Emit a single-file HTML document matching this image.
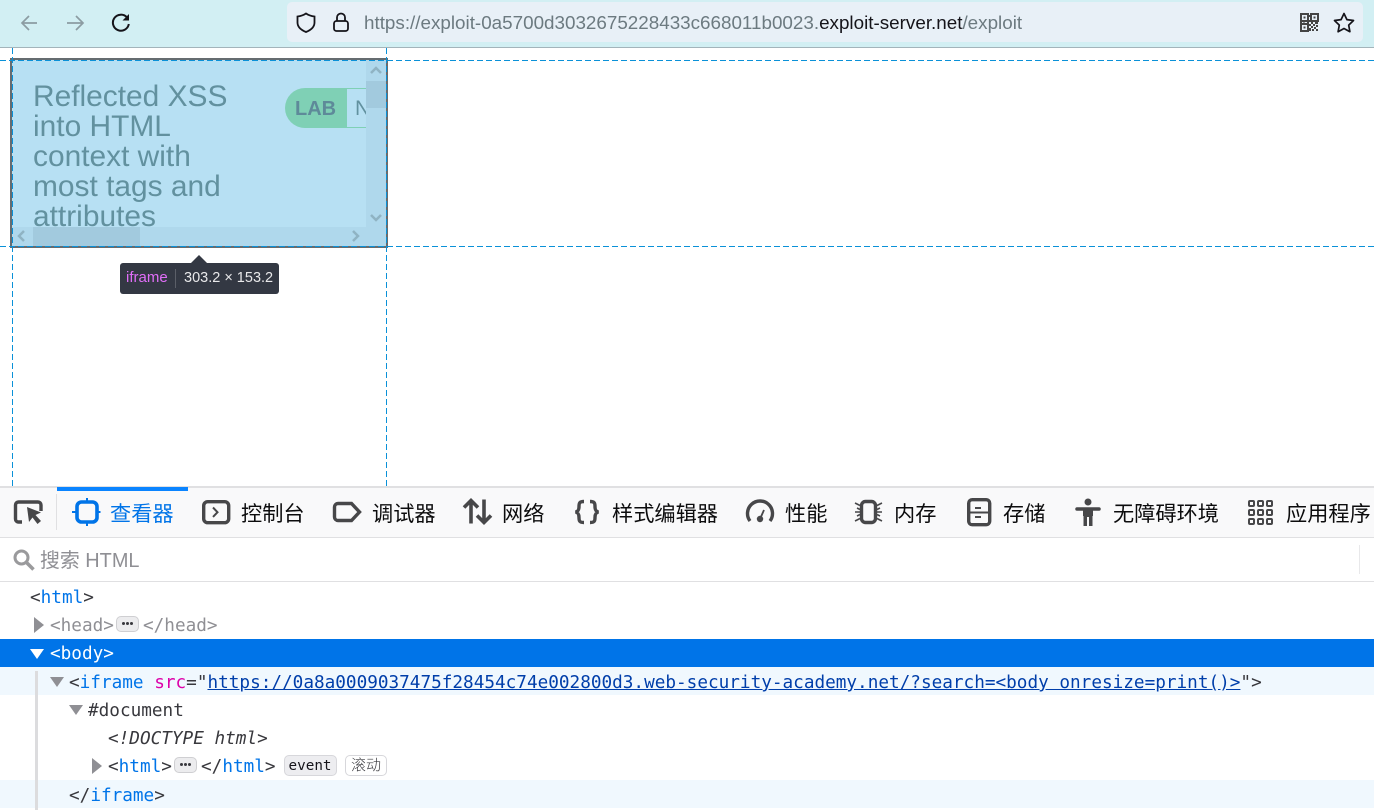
<!DOCTYPE html>
<html lang="zh"><head><meta charset="utf-8"><style>
html,body{margin:0;padding:0;width:1374px;height:810px;overflow:hidden;background:#fff}
body{position:relative;font-family:"Liberation Sans","Noto Sans CJK SC",sans-serif}
.a{position:absolute}
.t{position:absolute;white-space:nowrap}
.tab{position:absolute;top:498px;height:30px;line-height:30px;font-size:21.2px;color:#0c0c0d;white-space:nowrap;font-family:"Noto Sans CJK SC",sans-serif;font-weight:400}
svg{position:absolute;overflow:visible}
.row{position:absolute;left:0;width:1374px;height:28px}
.c{position:absolute;white-space:pre;font-family:"DejaVu Sans Mono",monospace;font-size:17.7px;line-height:28px;color:#38383d}
.b{color:#0074e8}.m{color:#dd00a9}.g{color:#8f8f94}
.more{position:absolute;width:23px;height:16px;background:#ececee;border:1px solid #cfcfd2;border-radius:5px;box-sizing:border-box}
.more:after{content:"";position:absolute;left:5px;top:5px;width:3px;height:3px;border-radius:50%;background:#38383d;box-shadow:4px 0 #38383d,8px 0 #38383d}
.tri{position:absolute;width:0;height:0}
.r{border-top:8px solid transparent;border-bottom:8px solid transparent;border-left:10px solid #8f8f94}
.d{border-left:7px solid transparent;border-right:7px solid transparent;border-top:10px solid #8f8f94}
</style></head><body>
<!-- browser toolbar -->
<div class="a" style="left:0;top:0;width:1374px;height:47px;background:#d2eff3"></div>
<div class="a" style="left:0;top:47px;width:1374px;height:1px;background:#a3b4ba"></div>
<div class="a" style="left:287px;top:2px;width:1076px;height:40px;background:#e8f0f7;border-radius:5px"></div>
<svg style="left:0;top:0" width="1374" height="47" fill="none">
<path d="M37 23H22M29 16l-7 7 7 7" stroke="#8c9ca2" stroke-width="1.7"/>
<path d="M67 23h15M76 16l7 7-7 7" stroke="#8c9ca2" stroke-width="1.7"/>
<path d="M127 17.5a8 8 0 1 0 1.8 6.5" stroke="#15141a" stroke-width="2"/><path d="M129 14v6.5h-6.5z" fill="#15141a"/>
<path d="M306 13.5c-3 2-6 2.7-8.500 3v6c0 4.500 3.500 7.500 8.500 9.500 5-2 8.500-5 8.500-9.500v-6c-2.500-.3-5.500-1-8.500-3z" stroke="#15141a" stroke-width="1.800"/>
<rect x="334" y="21" width="14" height="10" rx="2.500" stroke="#15141a" stroke-width="1.800"/><path d="M337 21v-3.500a4 4 0 0 1 8 0V21" stroke="#15141a" stroke-width="1.800"/>
<g fill="#444"><path d="M1301 14h7v7h-7zM1311 14h7v7h-7zM1301 24h7v7h-7z" fill="none" stroke="#444" stroke-width="2"/><rect x="1309" y="15" width="2" height="2"/><rect x="1303.500" y="16.500" width="2" height="2"/><rect x="1313.500" y="16.500" width="2" height="2"/><rect x="1303.500" y="26.500" width="2" height="2"/><rect x="1300" y="22" width="2" height="2"/><rect x="1303" y="22.500" width="2" height="1.500"/><rect x="1307" y="22" width="2" height="2"/><rect x="1309" y="20" width="2" height="2"/><rect x="1311" y="22" width="2" height="2"/><rect x="1315" y="22" width="3" height="2"/><rect x="1309" y="24" width="2" height="2"/><rect x="1313" y="24" width="2" height="2"/><rect x="1316" y="25" width="2" height="2"/><rect x="1311" y="26" width="2" height="2"/><rect x="1314" y="27" width="2" height="2"/><rect x="1309" y="28" width="2" height="3"/><rect x="1312" y="29" width="2" height="2"/><rect x="1316" y="29" width="2" height="2"/></g>
<path d="M1344 13.500l2.900 6.100 6.600.9-4.800 4.600 1.200 6.600-5.900-3.200-5.900 3.200 1.200-6.600-4.800-4.600 6.600-.9z" stroke="#15141a" stroke-width="1.700" stroke-linejoin="round"/>
</svg>
<div class="t" style="left:364px;top:11px;font-size:18.83px;line-height:24px;color:#6c7a80">https://exploit-0a5700d3032675228433c668011b0023.<span style="color:#15141a">exploit-server.net</span>/exploit</div>
<!-- inspected iframe -->
<div class="a" style="left:10px;top:58px;width:374px;height:186px;border:2px solid #666c70;background:#b7e0f3;overflow:hidden">
<div class="t" style="left:21px;top:21.600px;font-size:29.900px;line-height:30px;color:#62919f;white-space:normal;width:215px">Reflected XSS into HTML context with most tags and attributes</div>
<div class="a" style="left:273px;top:28px;width:61px;height:40px;background:#7fd0b5;border-radius:20px 0 0 20px"></div>
<div class="t" style="left:283px;top:37px;font-size:20px;font-weight:bold;line-height:24px;color:#5e8a99">LAB</div>
<div class="a" style="left:334px;top:28px;width:40px;height:38px;border:1px solid #7fd0b5;border-right:0"></div>
<div class="t" style="left:343px;top:37px;font-size:21px;line-height:24px;color:#62919f">N</div>
<div class="a" style="left:354px;top:0;width:20px;height:186px;background:#afd8ec"></div>
<div class="a" style="left:354px;top:21px;width:20px;height:27px;background:#a2cade"></div>
<div class="a" style="left:0;top:167px;width:374px;height:19px;background:#afd8ec"></div>
<div class="a" style="left:21px;top:167px;width:107px;height:19px;background:#a2cade"></div>
<svg style="left:0;top:0" width="374" height="186" fill="none" stroke="#8fb3c3" stroke-width="2.500"><path d="M359 13l5-5 5 5M359 155l5 5 5-5M12 171l-5 5 5 5M341 171l5 5-5 5"/></svg>
</div>
<svg style="left:0;top:48px" width="1374" height="440" fill="none" stroke="#0a91d8" stroke-width="1" stroke-dasharray="6 3"><path d="M0 12.500H1374M0 198.500H1374M12.500 0V439M386.500 0V439"/></svg>
<div class="a" style="left:120px;top:263px;width:159px;height:31px;background:#333843;border-radius:3px"></div>
<div class="a" style="left:191px;top:255px;width:16px;height:16px;background:#333843;clip-path:polygon(50% 0,100% 50%,50% 100%,0 50%)"></div>
<div class="a" style="left:175px;top:269px;width:1px;height:19px;background:#5b5f68"></div>
<div class="t" style="left:126px;top:269px;font-size:15px;line-height:18px;color:#e06ef8">iframe</div>
<div class="t" style="left:184px;top:269px;font-size:14.500px;line-height:18px;color:#e8e8ea">303.2 × 153.2</div>
<!-- devtools tabs -->
<div class="a" style="left:0;top:486px;width:1374px;height:2px;background:#e0e0e2"></div>
<div class="a" style="left:0;top:488px;width:1374px;height:49px;background:#f9f9fa"></div>
<div class="a" style="left:0;top:537px;width:1374px;height:1px;background:#e0e0e2"></div>
<div class="a" style="left:57px;top:487px;width:131px;height:4px;background:#0a84ff"></div>
<div class="a" style="left:56px;top:494px;width:1px;height:36px;background:#e0e0e2"></div>
<svg style="left:0;top:486px" width="1374" height="52" fill="none" stroke="#474749" stroke-width="3.400">
<path d="M22 36h-3.500a3 3 0 0 1-3-3V19a3 3 0 0 1 3-3h19.500a3 3 0 0 1 3 3v6"/>
<path d="M27 21l14 5.500-5.500 2.500 5.500 6-3.500 3-5-6.500-3.500 4.500z" fill="#474749" stroke="none"/>
<rect x="77" y="16" width="20" height="20" rx="4.500" stroke="#0074e8" stroke-width="3.600"/><path d="M87 12v4M87 36v4M72 26h5M97 26h3.500" stroke="#0074e8" stroke-width="2"/>
<rect x="203.700" y="15.700" width="25" height="21" rx="4"/><path d="M213 21.500l4.500 4.700-4.500 4.700" stroke-width="2"/>
<path d="M338 17.500h13.500l8 8.500-8 8.500H338a3.500 3.500 0 0 1-3.500-3.500V21a3.500 3.500 0 0 1 3.500-3.500z"/>
<path d="M471 37.500V14.500M464 21.500l7-7 7 7M484 13.500v23M477 29.500l7 7 7-7" stroke-width="3.600"/>
<path d="M584 15.500c-4.500 0-5 1.500-5 5 0 3.500-1 5-3.500 5.500 2.500.5 3.500 2 3.500 5.500 0 3.500.5 5 5 5M590 15.500c4.500 0 5 1.500 5 5 0 3.500 1 5 3.500 5.500-2.500.5-3.500 2-3.500 5.500 0 3.500-.5 5-5 5" stroke-width="3.400"/>
<path d="M750 35a12.500 12.500 0 1 1 20 0" stroke-width="3.400"/><circle cx="760" cy="33" r="3.200" fill="#474749" stroke="none"/><path d="M760 33l4-9" stroke-width="1.800"/>
<rect x="861.500" y="15.500" width="14" height="21" rx="4" stroke-width="3.400"/><path d="M855 17l5 2.500M855 26h5M855 35l5-2.500M882 17l-5 2.500M882 26h-5M882 35l-5-2.500M857 22l3 1.500M857 30l3-1.500M880 22l-3 1.500M880 30l-3-1.500" stroke-width="1.600"/>
<rect x="968.700" y="13.700" width="21" height="25" rx="3.500"/><path d="M975 22h6M975 31h6M969 26.500h20" stroke-width="2"/>
<circle cx="1088" cy="16" r="3.500" fill="#474749" stroke="none"/><path d="M1077 23h22" stroke-width="3.500" stroke-linecap="round"/><path d="M1083 22h10v8h-.5v10h-3.500v-9h-2v9h-3.500V30h-.5z" fill="#474749" stroke="none"/>
<g stroke-width="2"><rect x="1249" y="15" width="5" height="5" rx="1"/><rect x="1258" y="15" width="5" height="5" rx="1"/><rect x="1267" y="15" width="5" height="5" rx="1"/><rect x="1249" y="24" width="5" height="5" rx="1"/><rect x="1258" y="24" width="5" height="5" rx="1"/><rect x="1267" y="24" width="5" height="5" rx="1"/><rect x="1249" y="33" width="5" height="5" rx="1"/><rect x="1258" y="33" width="5" height="5" rx="1"/><rect x="1267" y="33" width="5" height="5" rx="1"/></g>
</svg>
<div class="tab" style="left:110px;color:#0074e8">查看器</div>
<div class="tab" style="left:241px">控制台</div>
<div class="tab" style="left:372px">调试器</div>
<div class="tab" style="left:502px">网络</div>
<div class="tab" style="left:612px">样式编辑器</div>
<div class="tab" style="left:785px">性能</div>
<div class="tab" style="left:894px">内存</div>
<div class="tab" style="left:1003px">存储</div>
<div class="tab" style="left:1113px">无障碍环境</div>
<div class="tab" style="left:1286px">应用程序</div>
<!-- search -->
<svg style="left:12px;top:548px" width="24" height="24" fill="none" stroke="#9a9a9c"><circle cx="9.500" cy="9.500" r="6.500" stroke-width="3"/><path d="M14.500 14.500l7 7" stroke-width="3.500"/></svg>
<div class="t" style="left:40px;top:547px;font-size:19.900px;line-height:28px;color:#8f8f94">搜索 HTML</div>
<div class="a" style="left:1359px;top:545px;width:1px;height:29px;background:#e8e8ea"></div>
<div class="a" style="left:0;top:581px;width:1374px;height:1px;background:#e0e0e2"></div>
<!-- markup tree -->
<div class="row" style="top:639px;background:#0074e8"></div>
<div class="row" style="top:667px;background:#f0f8fe"></div>
<div class="row" style="top:780px;background:#f0f8fe"></div>
<div class="a" style="left:35px;top:671px;width:3px;height:139px;background:#dcdcde"></div>
<div class="c" style="left:30px;top:584px">&lt;<span class="b">html</span>&gt;</div>
<div class="tri r" style="left:34px;top:617px"></div>
<div class="c g" style="left:50px;top:612px">&lt;head&gt;</div>
<div class="more" style="left:116px;top:616px"></div>
<div class="c g" style="left:143px;top:612px">&lt;/head&gt;</div>
<div class="tri d" style="left:30px;top:649px;border-top-color:#fff"></div>
<div class="c" style="left:50px;top:640px;color:#fff">&lt;body&gt;</div>
<div class="tri d" style="left:50px;top:677px"></div>
<div class="c" style="left:69px;top:669px">&lt;<span class="b">iframe</span> <span class="m">src</span>="<span style="color:#003eaa;text-decoration:underline">https://0a8a0009037475f28454c74e002800d3.web-security-academy.net/?search=&lt;body onresize=print()&gt;</span>"&gt;</div>
<div class="tri d" style="left:69px;top:705px"></div>
<div class="c" style="left:88px;top:697px">#document</div>
<div class="c" style="left:108px;top:725px;font-style:italic">&lt;!DOCTYPE html&gt;</div>
<div class="tri r" style="left:92px;top:758px"></div>
<div class="c" style="left:108px;top:753px">&lt;<span class="b">html</span>&gt;</div>
<div class="more" style="left:174px;top:757px"></div>
<div class="c" style="left:201px;top:753px">&lt;/<span class="b">html</span>&gt;</div>
<div class="a" style="left:284px;top:755px;width:53px;height:21px;background:#ededf0;border:1px solid #d7d7db;border-radius:5px;box-sizing:border-box"></div>
<div class="t" style="left:288.500px;top:757px;font-size:14.300px;line-height:18px;color:#15141a;font-family:'DejaVu Sans Mono',monospace">event</div>
<div class="a" style="left:345px;top:755px;width:42px;height:21px;background:#fff;border:1px solid #d7d7db;border-radius:5px;box-sizing:border-box"></div>
<div class="t" style="left:351px;top:755px;font-size:15px;line-height:20px;color:#38383d;font-family:'Noto Sans CJK SC',sans-serif;font-weight:300">滚动</div>
<div class="c" style="left:69px;top:782px">&lt;/<span class="b">iframe</span>&gt;</div>
</body></html>
